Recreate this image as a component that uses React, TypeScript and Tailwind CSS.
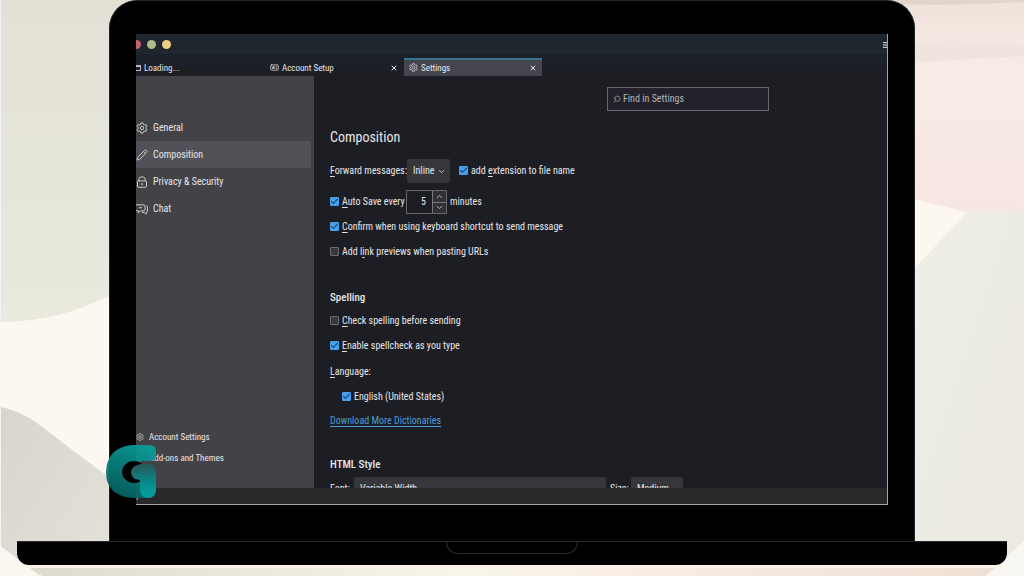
import type { ReactNode } from "react";
import { Check, ChevronDown, ChevronUp, IdCard, Menu, Pencil, Puzzle, Search, X } from "lucide-react";

function GearIcon({ className }: { className?: string }) {
  return (
    <svg className={className} viewBox="0 0 16 16" fill="none" stroke="currentColor" strokeWidth="1.3" aria-hidden="true">
      <path
        d="M6.6 1.2h2.8l.5 2.1 1.3.8 2.1-.7 1.4 2.5-1.6 1.4v1.4l1.6 1.4-1.4 2.5-2.1-.7-1.3.8-.5 2.1H6.6l-.5-2.1-1.3-.8-2.1.7-1.4-2.5 1.6-1.4V7.3L1.3 5.9l1.4-2.5 2.1.7 1.3-.8z"
        strokeLinejoin="round"
      />
      <circle cx="8" cy="8" r="2.3" />
    </svg>
  );
}

function LockIcon({ className }: { className?: string }) {
  return (
    <svg className={className} viewBox="0 0 16 16" fill="none" stroke="currentColor" strokeWidth="1.3" aria-hidden="true">
      <rect x="2" y="6.5" width="12" height="8.5" rx="1.5" />
      <path d="M3.5 6.5V5.5a4.5 4.5 0 0 1 9 0v1" />
      <path d="M8 9.5v2.5" strokeWidth="2" />
    </svg>
  );
}

function ChatIcon({ className }: { className?: string }) {
  return (
    <svg className={className} viewBox="0 0 16 16" fill="none" stroke="currentColor" strokeWidth="1.3" strokeLinejoin="round" aria-hidden="true">
      <path d="M0 2.5h10.500q1.500 0 1.500 1.500v5q0 1.500-1.500 1.500H6L3.500 13v-2.500H0" />
      <path d="M14 3.500q1.300.3 1.300 1.500v6q0 1.500-1.800 1.500V15L11 12.500H8" />
      <path d="M4 6.300h4" />
    </svg>
  );
}

const categories = [
  { label: "General", icon: GearIcon },
  { label: "Composition", icon: Pencil, active: true },
  { label: "Privacy & Security", icon: LockIcon },
  { label: "Chat", icon: ChatIcon },
];

const footerLinks = [
  { label: "Account Settings", icon: GearIcon },
  { label: "Add-ons and Themes", icon: Puzzle },
];

function Key({ children }: { children: string }) {
  return <span className="underline underline-offset-2">{children}</span>;
}

function CheckRow({ checked, className = "", children }: { checked?: boolean; className?: string; children: ReactNode }) {
  return (
    <label className={`flex h-4 items-center gap-[3px] whitespace-nowrap ${className}`}>
      <span className="mb-px grid size-[9px] shrink-0">
        <input
          type="checkbox"
          defaultChecked={checked}
          className="peer col-start-1 row-start-1 size-[9px] appearance-none rounded-[1px] border border-[#6c6c71] bg-[#38383d] checked:border-[#45a1f0] checked:bg-[#45a1f0]"
        />
        <Check
          className="pointer-events-none invisible col-start-1 row-start-1 size-[9px] text-[#1d4a78] peer-checked:visible"
          strokeWidth={3}
        />
      </span>
      <span>{children}</span>
    </label>
  );
}

function Dropdown({ id, value, className }: { id: string; value: string; className: string }) {
  return (
    <span className={`grid h-6 items-center rounded-[2px] bg-[#36363b] ${className}`}>
      <select id={id} defaultValue={value} className="col-start-1 row-start-1 h-6 w-full appearance-none pl-[6px]">
        <option>{value}</option>
      </select>
      <ChevronDown className="pointer-events-none col-start-1 row-start-1 mr-1 size-[9px] justify-self-end" />
    </span>
  );
}

function Backdrop() {
  return (
    <svg
      className="absolute inset-0 size-full"
      viewBox="0 0 1024 576"
      preserveAspectRatio="none"
      aria-hidden="true"
    >
      <defs>
        <linearGradient id="sage" x1="0" y1="0" x2="0" y2="1">
          <stop offset="0" stopColor="#e3e1d5" />
          <stop offset="1" stopColor="#e9e9dd" />
        </linearGradient>
        <linearGradient id="blush" x1="0" y1="0" x2="0" y2="1">
          <stop offset="0" stopColor="#f0e2da" />
          <stop offset="0.3" stopColor="#f8ebe6" />
          <stop offset="1" stopColor="#f7e7e2" />
        </linearGradient>
        <linearGradient id="stone" x1="0" y1="0" x2="1" y2="1">
          <stop offset="0" stopColor="#d8d5cd" />
          <stop offset="1" stopColor="#e4e1d8" />
        </linearGradient>
        <linearGradient id="mist" x1="0" y1="0" x2="1" y2="1">
          <stop offset="0" stopColor="#efefe8" />
          <stop offset="1" stopColor="#ebe9e0" />
        </linearGradient>
        <linearGradient id="strip" x1="0" y1="0" x2="1" y2="0">
          <stop offset="0" stopColor="#dedace" />
          <stop offset="0.45" stopColor="#f8f5e9" />
          <stop offset="0.6" stopColor="#f9eee5" />
          <stop offset="1" stopColor="#efe0d5" />
        </linearGradient>
      </defs>
      <rect width="1024" height="576" fill="#fcf7ef" />
      <path d="M0 0H130V285Q90 307 58 315Q30 322 0 322Z" fill="url(#sage)" />
      <path d="M0 407Q24 411 50 433Q80 456 110 478V541H40V576Q20 560 0 546Z" fill="url(#stone)" />
      <path d="M890 0H1024V213H970Q940 205 890 194Z" fill="url(#blush)" />
      <path d="M893 0H1024V2Q960 6 893 4Z" fill="#e2d5cd" />
      <path d="M905 43Q960 38 1024 45V56Q960 60 905 63Z" fill="#f0e4df" />
      <path d="M968 211H1024V541L990 576H900V284Z" fill="url(#mist)" />
      <path d="M1024 541L985 576H1024Z" fill="#f7f6f0" />
      <path d="M0 564H1000V568H0Z" fill="#faf3ea" />
      <path d="M0 546L40 576H0Z" fill="#fbf7ef" />
      <path d="M32 568H995L985 576H42Z" fill="url(#strip)" />
      <path d="M0 0H1V576H0Z" fill="#f4f4f6" />
    </svg>
  );
}

function Watermark() {
  return (
    <svg className="h-[54px] w-[51px]" viewBox="0 0 51 54" aria-hidden="true">
      <defs>
        <linearGradient id="teal" x1="0.8" y1="0" x2="0.4" y2="1">
          <stop offset="0" stopColor="#079d9a" />
          <stop offset="0.5" stopColor="#087f7d" />
          <stop offset="1" stopColor="#06605f" />
        </linearGradient>
        <linearGradient id="tealStem" x1="0" y1="0" x2="0" y2="1">
          <stop offset="0" stopColor="#2a5558" />
          <stop offset="0.6" stopColor="#04908e" />
          <stop offset="1" stopColor="#04a09d" />
        </linearGradient>
      </defs>
      <path
        d="M27 0H43Q50 0 50 6V10Q50 16 43 16H34V38L42 53H27Q0 51 0 27Q1 2 27 0Z"
        fill="url(#teal)"
        opacity="0.95"
      />
      <ellipse cx="28" cy="27" rx="12" ry="11" fill="#000" />
      <path d="M35 19H44Q50 20 50 27V46Q49 53 42 53Q34 52 34 45V35Q25 34 25 27Q26 20 35 19Z" fill="url(#tealStem)" />
    </svg>
  );
}

function TabBar() {
  return (
    <div className="flex h-[22px] shrink-0 items-end bg-gradient-to-b from-[#1b212a] to-[#1d1e24] text-[9px]">
      <button className="flex h-[17px] w-[134px] items-center gap-[3px] overflow-hidden">
        <span className="h-[6px] w-[5px] rounded-r-[1px] border border-l-0 border-t-2 border-[#b8b8bc]" />
        Loading...
      </button>
      <div className="flex h-[17px] w-[134px] items-center">
        <button className="flex flex-1 items-center gap-[3px]">
          <IdCard className="size-[9px]" />
          Account Setup
        </button>
        <button aria-label="Close Account Setup" className="mr-[6px]">
          <X className="size-2" strokeWidth={3} />
        </button>
      </div>
      <div className="flex h-[18px] w-[138px] items-center border-b border-t-2 border-b-[#45464d] border-t-[#35758f] bg-[#45464d] px-[5px]">
        <button className="flex flex-1 items-center gap-[3px]">
          <GearIcon className="size-[9px]" />
          Settings
        </button>
        <button aria-label="Close Settings">
          <X className="size-2" strokeWidth={3} />
        </button>
      </div>
    </div>
  );
}

function Sidebar() {
  return (
    <nav className="flex w-[178px] shrink-0 flex-col bg-[#424247] pb-5 pt-[38px]">
      {categories.map(({ label, icon: Icon, active }) => (
        <a
          key={label}
          href="#"
          className={`mr-[3px] flex h-[27px] items-center gap-[5px] ${active ? "bg-[#515157]" : ""}`}
        >
          <Icon className="size-3 text-[#cfcfd2]" />
          {label}
        </a>
      ))}
      <div className="mt-auto text-[9px]">
        {footerLinks.map(({ label, icon: Icon }) => (
          <a key={label} href="#" className="flex h-[21px] items-center gap-[5px]">
            <Icon className="size-2 text-[#cfcfd2]" />
            {label}
          </a>
        ))}
      </div>
    </nav>
  );
}

function CompositionPane() {
  return (
    <main className="min-w-0 flex-1 overflow-hidden pl-4 pt-[11px]">
      <div className="max-w-[439px]">
        <label className="ml-auto flex h-6 w-[162px] items-center gap-[2px] border border-[#66666c] bg-[#23222b] px-[5px]">
          <Search className="size-2 -scale-x-100 text-[#b4b4b8]" />
          <input
            type="search"
            aria-label="Find in Settings"
            placeholder="Find in Settings"
            className="min-w-0 flex-1 outline-none placeholder:text-[#b4b4b8]"
          />
        </label>

        <h1 className="mt-[14px] text-[14px] leading-6">Composition</h1>
        <div className="mt-[10px] flex h-6 items-center">
          <label htmlFor="forward" className="w-[77px] whitespace-nowrap">
            <Key>F</Key>orward messages:
          </label>
          <Dropdown id="forward" value="Inline" className="w-[43px]" />
          <CheckRow checked className="ml-[9px]">
            add <Key>e</Key>xtension to file name
          </CheckRow>
        </div>
        <div className="mt-[7px] flex h-6 items-center">
          <CheckRow checked className="w-[76px]">
            <Key>A</Key>uto Save every
          </CheckRow>
          <span className="flex h-6 w-[41px] border border-[#66666c]">
            <input
              aria-label="Auto save interval in minutes"
              defaultValue="5"
              className="w-[25px] pr-[6px] text-right outline-none"
            />
            <span className="flex flex-1 flex-col divide-y divide-[#77777d] border-l border-[#77777d] bg-[#303035]">
              <button aria-label="Increase" className="grid flex-1 place-items-center">
                <ChevronUp className="size-[9px]" />
              </button>
              <button aria-label="Decrease" className="grid flex-1 place-items-center">
                <ChevronDown className="size-[9px]" />
              </button>
            </span>
          </span>
          <span className="ml-[3px]">minutes</span>
        </div>
        <CheckRow checked className="mt-[5px]">
          <Key>C</Key>onfirm when using keyboard shortcut to send message
        </CheckRow>
        <CheckRow className="mt-[9px]">
          Add l<Key>i</Key>nk previews when pasting URLs
        </CheckRow>

        <h2 className="mt-7 text-[11px] font-medium leading-5">Spelling</h2>
        <CheckRow className="mt-[5px]">
          <Key>C</Key>heck spelling before sending
        </CheckRow>
        <CheckRow checked className="mt-[9px]">
          <Key>E</Key>nable spellcheck as you type
        </CheckRow>
        <p className="mt-[10px] leading-4">
          <Key>L</Key>anguage:
        </p>
        <CheckRow checked className="ml-3 mt-[9px]">
          English (United States)
        </CheckRow>
        <a href="#" className="mt-2 inline-block align-top leading-4 text-[#4d9bd6] underline underline-offset-2">
          Download More Dictionaries
        </a>

        <h2 className="mt-[26px] text-[11px] font-medium leading-5">HTML Style</h2>
        <div className="mt-[2px] flex h-6 items-center">
          <label htmlFor="font" className="w-6">
            F<Key>o</Key>nt:
          </label>
          <Dropdown id="font" value="Variable Width" className="w-[252px]" />
          <label htmlFor="size" className="ml-1 w-[21px]">
            Si<Key>z</Key>e:
          </label>
          <Dropdown id="size" value="Medium" className="w-[52px]" />
        </div>
      </div>
    </main>
  );
}

export default function App() {
  return (
    <div className="relative h-screen overflow-hidden font-['Roboto_Condensed','Liberation_Sans',sans-serif] text-[10px] leading-4 text-[#e6e6e9]">
      <Backdrop />
      <div className="relative flex h-full flex-col pb-[11px]">
        {/* Lid */}
        <div className="mx-[109px] flex min-h-0 flex-1 flex-col rounded-t-[28px] border-x border-t border-[#222222] bg-black px-[26px] pb-9 pt-[33px]">
          <div className="relative flex min-h-0 flex-1 flex-col border-b border-r border-[#a5a5a8] bg-[#1d1e23]">
            <header className="flex h-5 shrink-0 items-center gap-[6px] bg-[#1f262e] pt-px">
              <span className="h-[9px] w-[5px] rounded-r-full bg-[#c4616d]" />
              <span className="size-[9px] rounded-full bg-[#a9be8b]" />
              <span className="size-[9px] rounded-full bg-[#f0cd85]" />
              <button aria-label="Menu" className="ml-auto w-[5px] overflow-hidden">
                <Menu className="size-2" strokeWidth={3} />
              </button>
            </header>
            <TabBar />
            <div className="flex min-h-0 flex-1">
              <Sidebar />
              <CompositionPane />
            </div>
            <footer className="flex h-4 shrink-0 items-center bg-[#29292c]">
              <span className="h-[7px] w-[2px] rounded-r-full border-r border-[#c8c8cc]" />
            </footer>
            <div className="absolute -left-[30px] bottom-[5px]">
              <Watermark />
            </div>
          </div>
        </div>
        {/* Base */}
        <div className="mx-[17px] h-6 rounded-b-[12px] border-t border-[#2a2a2a] bg-black">
          <div className="mx-auto h-3 w-[132px] rounded-b-[12px] border border-t-0 border-[#2e2e2e]" />
        </div>
      </div>
    </div>
  );
}
